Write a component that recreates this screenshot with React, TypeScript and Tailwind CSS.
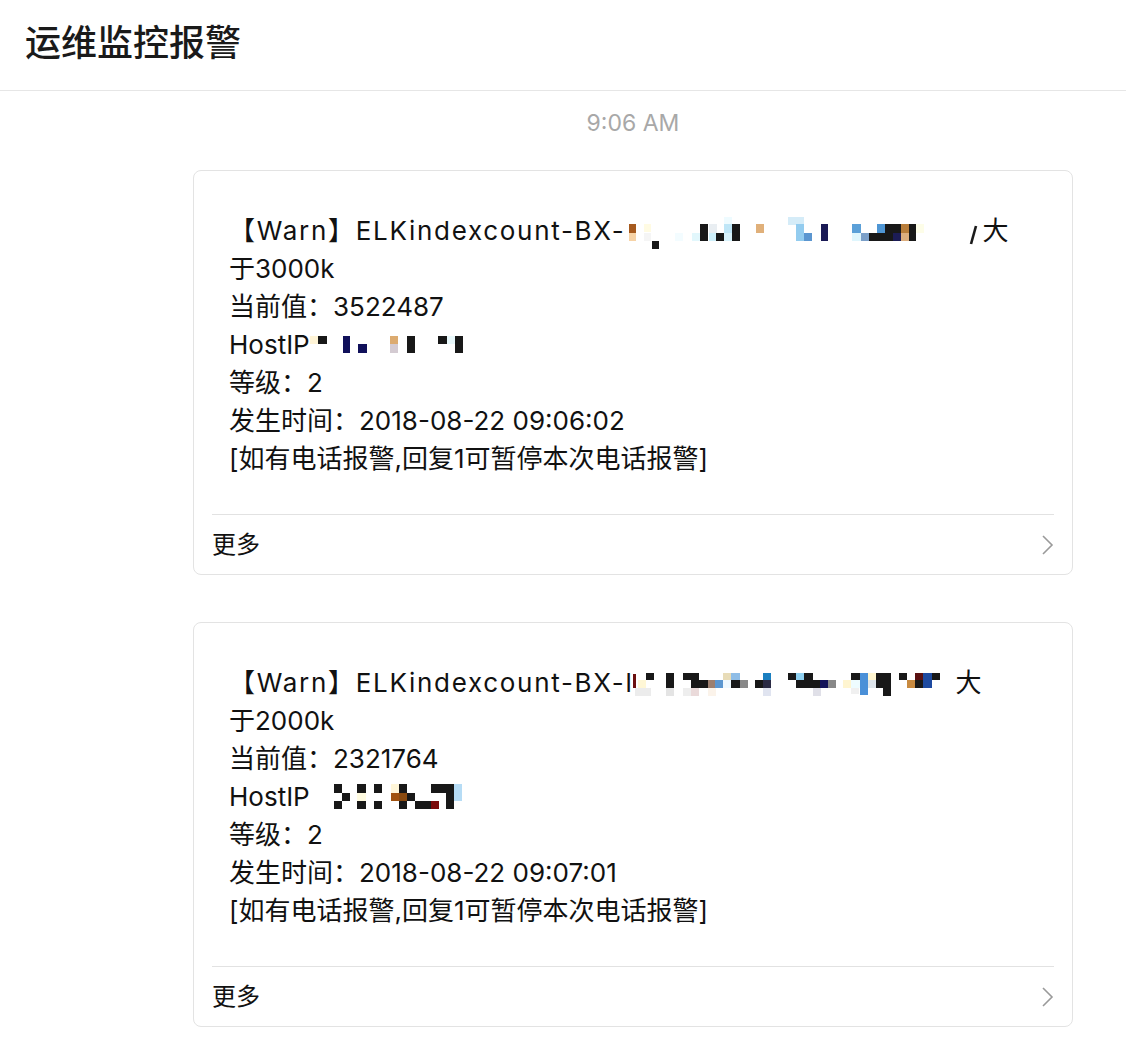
type Cell = [number, number, number, number, string];

const K = "#181818";

// pixelated (redacted) bits, drawn as small rects on a 38px line box
const mosaic1: Cell[] = [
  [4, 12, 7, 9, "#a65a1e"], [4, 21, 7, 8, "#f7d3a6"],
  [19, 12, 7, 8, "#fffbe3"], [19, 21, 7, 8, "#f5f5f5"], [27, 29, 7, 8, K],
  [50, 21, 8, 8, "#f3fcff"], [67, 21, 8, 8, "#e2f7fc"],
  [75, 12, 8, 17, K], [84, 12, 8, 9, "#e9eef2"], [84, 21, 7, 8, "#cdeffa"],
  [91, 21, 8, 8, K], [99, 5, 8, 7, "#eefbff"], [99, 12, 8, 9, "#bfe6f7"], [99, 21, 8, 8, "#d7f2fb"],
  [107, 12, 8, 17, K],
  [131, 12, 8, 9, "#e0b07a"],
  [163, 5, 16, 8, "#d5ecf8"], [171, 12, 8, 9, "#93ccef"], [171, 21, 8, 8, "#93ccef"], [179, 21, 8, 8, "#5b96d0"],
  [196, 12, 7, 17, "#1a1a55"],
  [227, 12, 9, 9, "#5ba0d8"], [227, 21, 9, 8, "#dff6fd"], [236, 21, 8, 8, "#7b9fc8"],
  [244, 21, 8, 8, K], [252, 12, 8, 9, "#4f96d4"], [252, 21, 8, 8, K],
  [260, 12, 16, 9, K], [260, 21, 8, 8, K], [268, 21, 8, 8, "#1c1c55"],
  [276, 12, 8, 9, "#b87d3a"], [276, 21, 8, 8, "#dcae7e"], [284, 12, 7, 17, K],
  [291, 12, 8, 9, "#fdfde8"],
];

const host1: Cell[] = [
  [0, 10, 8, 8, "#fff4d6"], [8, 10, 9, 8, K],
  [33, 10, 7, 17, "#10105a"], [48, 18, 9, 9, "#10105a"],
  [80, 10, 8, 8, "#dcab70"], [80, 18, 8, 9, "#d4cbd2"],
  [97, 10, 8, 17, K],
  [128, 10, 9, 8, K], [137, 10, 8, 8, "#e8f8fb"], [145, 10, 8, 17, K],
];

const mosaic2: Cell[] = [
  [0, 10, 3, 14, "#6b1010"], [5, 16, 8, 8, "#fff7d6"], [2, 24, 16, 8, "#ececec"],
  [13, 9, 8, 7, K],
  [33, 9, 8, 15, K], [33, 24, 8, 8, "#e4e4e4"],
  [50, 9, 16, 7, K], [58, 16, 17, 8, K], [50, 24, 8, 8, "#eeeeee"], [58, 24, 8, 8, "#eadada"],
  [75, 16, 8, 8, "#9c7f6f"], [75, 24, 8, 8, "#fbf3ea"],
  [82, 16, 8, 8, "#5b96d0"], [90, 9, 8, 7, "#e8dcb8"], [90, 16, 8, 8, "#eef8ff"],
  [98, 9, 9, 7, "#8fbde6"], [98, 16, 9, 8, K], [107, 16, 8, 8, "#888888"],
  [122, 16, 8, 8, K], [130, 9, 8, 7, "#1b7fc0"], [130, 16, 8, 8, "#2a2a44"], [130, 24, 8, 8, "#e0e4f0"],
  [155, 9, 8, 7, K], [163, 9, 8, 7, "#8fd0f0"], [163, 16, 8, 8, K],
  [171, 9, 9, 15, K], [180, 16, 7, 8, K], [180, 24, 8, 8, "#e0e0e8"],
  [187, 16, 8, 8, "#15155a"], [195, 16, 8, 8, "#888888"],
  [210, 16, 8, 8, "#fff5d0"], [218, 9, 9, 7, K], [218, 16, 9, 8, "#eefcff"], [218, 24, 8, 6, "#f0f0f0"],
  [227, 9, 8, 22, "#4a90d8"], [235, 9, 8, 7, "#fff5d0"], [235, 16, 8, 8, "#dde4ea"],
  [243, 9, 15, 15, K], [250, 24, 8, 8, K],
  [266, 9, 8, 7, K], [274, 16, 8, 8, "#c88a40"], [282, 9, 8, 7, "#5a1010"], [282, 16, 8, 8, K],
  [290, 9, 9, 15, "#1d4aa0"], [299, 9, 8, 7, K],
];

const host2: Cell[] = [
  [0, 6, 8, 9, K], [8, 15, 8, 8, K], [0, 23, 8, 8, K],
  [23, 6, 9, 9, K], [23, 15, 9, 8, "#fffbe0"], [23, 23, 9, 8, K],
  [40, 6, 8, 9, K], [40, 23, 8, 8, K],
  [57, 6, 8, 9, "#fff6d8"], [57, 15, 8, 8, "#a0520f"], [65, 15, 8, 8, "#8a4a10"],
  [65, 6, 8, 9, K], [65, 23, 8, 8, K], [73, 15, 8, 8, K],
  [81, 23, 16, 8, K], [97, 23, 8, 8, "#7a0a0a"], [97, 6, 23, 9, K],
  [112, 15, 8, 16, K], [120, 6, 8, 17, "#b6dcf5"],
];

function Mosaic({ cells, width, tail }: { cells: Cell[]; width: number; tail?: boolean }) {
  return (
    <svg width={width} height={38} className="inline-block align-top">
      {cells.map(([x, y, w, h, c], i) => (
        <rect key={i} x={x} y={y} width={w} height={h} fill={c} />
      ))}
      {tail && <path d="M351 14 L346 32" stroke="#1a1a1a" strokeWidth={2.6} />}
    </svg>
  );
}

type Alert = {
  head: string;
  mosaic: Cell[];
  mosaicW: number;
  tail?: boolean;
  limit: string;
  value: string;
  host: Cell[];
  hostW: number;
  hostGap: boolean;
  time: string;
};

const alerts: Alert[] = [
  {
    head: "ELKindexcount-BX-",
    mosaic: mosaic1,
    mosaicW: 357,
    tail: true,
    limit: "于3000k",
    value: "3522487",
    host: host1,
    hostW: 153,
    hostGap: false,
    time: "2018-08-22 09:06:02",
  },
  {
    head: "ELKindexcount-BX-l",
    mosaic: mosaic2,
    mosaicW: 322,
    limit: "于2000k",
    value: "2321764",
    host: host2,
    hostW: 128,
    hostGap: true,
    time: "2018-08-22 09:07:01",
  },
];

function AlertCard({ a }: { a: Alert }) {
  return (
    <div className="ml-[193px] mr-[53px] rounded-lg border border-[#e3e3e3] bg-white">
      <div className="px-[35px] pt-[41px] pb-[36px] text-[26px] leading-[38px] text-[#111]">
        <div className="whitespace-nowrap">
          <span className="tracking-[1.7px]">【Warn】{a.head}</span>
          <Mosaic cells={a.mosaic} width={a.mosaicW} tail={a.tail} />
          大
        </div>
        <div>{a.limit}</div>
        <div>当前值：{a.value}</div>
        <div className="whitespace-nowrap">
          HostIP{a.hostGap && <span className="inline-block w-[24px]" />}
          <Mosaic cells={a.host} width={a.hostW} />
        </div>
        <div>等级：2</div>
        <div>发生时间：{a.time}</div>
        <div>[如有电话报警,回复1可暂停本次电话报警]</div>
      </div>
      <div className="mx-[18px] border-t border-[#e2e2e2] flex items-center justify-between h-[60px]">
        <span className="text-[24px] text-[#111]">更多</span>
        <svg width="13" height="22" viewBox="0 0 13 22">
          <path d="M2 2 L11 11 L2 20" fill="none" stroke="#9a9a9a" strokeWidth="1.6" />
        </svg>
      </div>
    </div>
  );
}

export default function App() {
  return (
    <div className="w-[1126px] h-[1046px] bg-white font-[Inter,'Noto_Sans_CJK_SC',sans-serif] overflow-hidden">
      <div className="h-[91px] border-b border-[#e6e6e6] flex items-center pl-[25px] pb-[4px]">
        <h1 className="text-[36px] font-medium text-[#1a1a1a]">运维监控报警</h1>
      </div>
      <div className="ml-[193px] mr-[53px] pt-[19px] text-center text-[23px] leading-[26px] text-[#a8a8a8]">
        9:06 AM
      </div>
      <div className="mt-[34px] flex flex-col gap-[47px]">
        {alerts.map((a) => (
          <AlertCard key={a.time} a={a} />
        ))}
      </div>
    </div>
  );
}
